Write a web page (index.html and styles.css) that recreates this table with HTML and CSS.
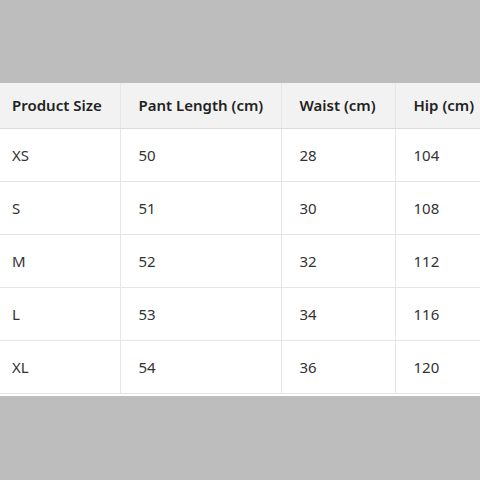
FILE: index.html
```html
<!DOCTYPE html>
<html>
<head>
<meta charset="utf-8">
<link rel="stylesheet" href="styles.css">
</head>
<body>
<div class="wrap">
<table class="sizes">
<colgroup>
<col class="c1"><col class="c2"><col class="c3"><col class="c4">
</colgroup>
<thead>
<tr><th>Product Size</th><th>Pant Length (cm)</th><th>Waist (cm)</th><th>Hip (cm)</th></tr>
</thead>
<tbody>
<tr><td>XS</td><td>50</td><td>28</td><td>104</td></tr>
<tr><td>S</td><td>51</td><td>30</td><td>108</td></tr>
<tr><td>M</td><td>52</td><td>32</td><td>112</td></tr>
<tr><td>L</td><td>53</td><td>34</td><td>116</td></tr>
<tr><td>XL</td><td>54</td><td>36</td><td>120</td></tr>
</tbody>
</table>
</div>
</body>
</html>
```
FILE: styles.css
```css
html, body {
  margin: 0;
  padding: 0;
  background: #bdbdbd;
  overflow: hidden;
}
body {
  font-family: "Segoe UI", "Noto Sans", "Open Sans", sans-serif;
  color: #333;
}
.wrap {
  margin-top: 83px;
  background: #fff;
  padding-bottom: 2px;
  width: 100%;
  overflow: hidden;
}
.sizes {
  border-collapse: collapse;
  table-layout: fixed;
  width: 560px;
  font-size: 15px;
}
.c1 { width: 120px; }
.c2 { width: 161px; }
.c3 { width: 114px; }
.c4 { width: 165px; }
.sizes th, .sizes td {
  text-align: left;
  padding: 0 0 0 18px;
  border-left: 1px solid #e6e6e6;
  border-bottom: 1px solid #e6e6e6;
  white-space: nowrap;
}
.sizes th:first-child, .sizes td:first-child {
  padding-left: 12px;
  border-left: none;
}
.sizes th {
  background: #f2f2f2;
  font-weight: 600;
  color: #222;
  height: 43px;
  padding-bottom: 2px;
  border-bottom-color: #dcdcdc;
}
.sizes td {
  height: 52px;
  font-weight: 400;
}
```
